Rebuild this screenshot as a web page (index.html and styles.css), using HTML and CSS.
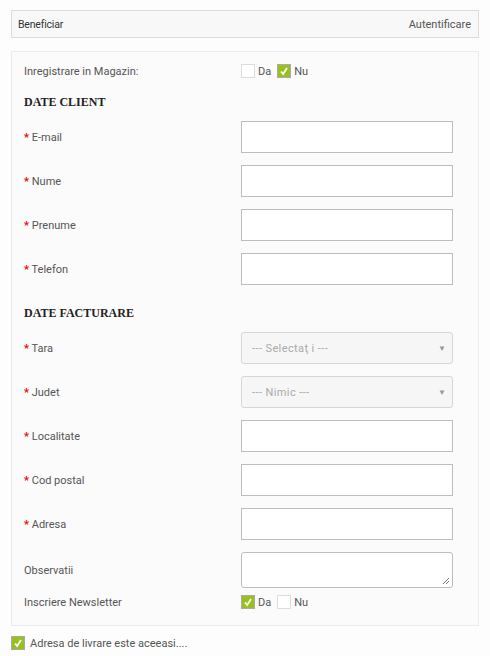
FILE: index.html
```html
<!DOCTYPE html>
<html>
<head>
<meta charset="utf-8">
<link rel="stylesheet" href="styles.css">
</head>
<body>
<div class="page">
  <div class="topbar">
    <span class="topbar-title">Beneficiar</span>
    <span class="topbar-link">Autentificare</span>
  </div>

  <div class="box">
    <div class="row row-check">
      <span class="label">Inregistrare in Magazin:</span>
      <span class="choices">
        <span class="cb"></span><span class="cb-text">Da</span>
        <span class="cb cb-on"><svg viewBox="0 0 14 14"><path d="M3.5 7.5 L6 10.5 L10.5 3.5" /></svg></span><span class="cb-text">Nu</span>
      </span>
    </div>

    <div class="heading heading-first">DATE CLIENT</div>

    <div class="row"><span class="label"><b class="req">*</b> E-mail</span><span class="input"></span></div>
    <div class="row"><span class="label"><b class="req">*</b> Nume</span><span class="input"></span></div>
    <div class="row"><span class="label"><b class="req">*</b> Prenume</span><span class="input"></span></div>
    <div class="row"><span class="label"><b class="req">*</b> Telefon</span><span class="input"></span></div>

    <div class="heading heading-second">DATE FACTURARE</div>

    <div class="row"><span class="label"><b class="req">*</b> Tara</span><span class="select"><span class="ph">--- Selectaţ i ---</span><span class="arrow">▼</span></span></div>
    <div class="row"><span class="label"><b class="req">*</b> Judet</span><span class="select"><span class="ph">--- Nimic ---</span><span class="arrow">▼</span></span></div>
    <div class="row"><span class="label"><b class="req">*</b> Localitate</span><span class="input"></span></div>
    <div class="row"><span class="label"><b class="req">*</b> Cod postal</span><span class="input"></span></div>
    <div class="row"><span class="label"><b class="req">*</b> Adresa</span><span class="input"></span></div>
    <div class="row row-area"><span class="label">Observatii</span><span class="textarea"><svg class="grip" viewBox="0 0 8 8"><path d="M7 1 L1 7 M7 4 L4 7" /></svg></span></div>

    <div class="row row-check row-news">
      <span class="label">Inscriere Newsletter</span>
      <span class="choices">
        <span class="cb cb-on"><svg viewBox="0 0 14 14"><path d="M3.5 7.5 L6 10.5 L10.5 3.5" /></svg></span><span class="cb-text">Da</span>
        <span class="cb"></span><span class="cb-text">Nu</span>
      </span>
    </div>
  </div>

  <div class="same">
    <span class="cb cb-on"><svg viewBox="0 0 14 14"><path d="M3.5 7.5 L6 10.5 L10.5 3.5" /></svg></span>
    <span class="same-text">Adresa de livrare este aceeasi....</span>
  </div>
</div>
</body>
</html>
```

FILE: styles.css
```css
html, body {
  margin: 0;
  padding: 0;
  background: #fdfdfd;
}
body {
  font-family: Roboto, "Liberation Sans", Arial, sans-serif;
  font-size: 11px;
  color: #555;
}
.page {
  padding: 10px 11px 0 11px;
}
.topbar {
  height: 26px;
  border: 1px solid #dcdcdc;
  background: #f8f8f8;
  display: flex;
  align-items: center;
  justify-content: space-between;
  padding: 0 7px 0 6px;
}
.topbar-title {
  color: #333;
  font-size: 10.5px;
  letter-spacing: -0.2px;
}
.topbar-link {
  color: #555;
  font-size: 11px;
}
.box {
  margin-top: 13px;
  border: 1px solid #ececec;
  background: #fbfbfb;
  padding: 12px 25px 16px 12px;
}
.row {
  display: flex;
  align-items: center;
  height: 32px;
  margin-bottom: 12px;
}
.row-check {
  height: 14px;
  margin-bottom: 0;
}
.row-area {
  height: 36px;
  margin-bottom: 7px;
}
.label {
  width: 217px;
  flex: none;
  color: #555;
}
.req {
  color: #e00;
  font-weight: bold;
}
.input, .select, .textarea {
  display: block;
  width: 212px;
  height: 32px;
  box-sizing: border-box;
  border: 1px solid #bdbdbd;
  background: #fff;
}
.select {
  border: 1px solid #d6d6d6;
  border-radius: 3px;
  background: #f6f6f6;
  display: flex;
  align-items: center;
  justify-content: space-between;
  padding: 0 6px 0 10px;
}
.ph {
  color: #aaa;
  font-size: 11px;
  letter-spacing: 0.4px;
}
.arrow {
  color: #999;
  font-size: 8px;
}
.textarea {
  height: 36px;
  border-radius: 3px;
  position: relative;
}
.grip {
  position: absolute;
  right: 2px;
  bottom: 2px;
  width: 8px;
  height: 8px;
  stroke: #777;
  stroke-width: 1;
  fill: none;
}
.choices {
  display: flex;
  align-items: center;
}
.cb {
  width: 14px;
  height: 14px;
  box-sizing: border-box;
  border: 1px solid #ddd;
  background: #fff;
  display: inline-block;
  flex: none;
}
.cb-on {
  background: #98c11d;
  border-color: #aaa;
}
.cb svg {
  display: block;
  width: 12px;
  height: 12px;
  fill: none;
  stroke: #fff;
  stroke-width: 2;
}
.cb-text {
  margin: 0 6px 0 3px;
  color: #555;
}
.heading {
  font-family: "Liberation Serif", "DejaVu Serif", serif;
  font-weight: bold;
  font-size: 12px;
  color: #222;
  height: 16px;
  line-height: 16px;
}
.heading-first {
  margin-top: 16px;
  margin-bottom: 11px;
}
.heading-second {
  margin-top: 20px;
  margin-bottom: 11px;
}
.same {
  display: flex;
  align-items: center;
  margin-top: 10px;
}
.same-text {
  margin-left: 5px;
  color: #555;
}
```
